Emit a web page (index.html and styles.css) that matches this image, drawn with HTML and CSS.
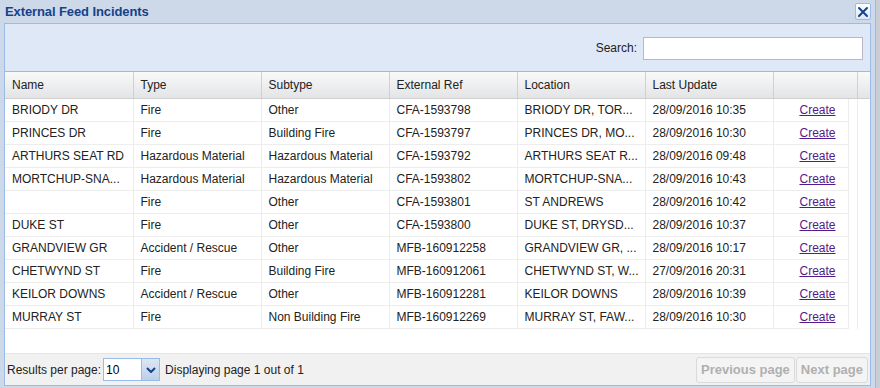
FILE: index.html
```html
<!DOCTYPE html>
<html lang="en">
<head>
    <meta charset="UTF-8">
    <title>External Feed Incidents</title>
    <link rel="stylesheet" href="styles.css">
</head>
<body>
    <div class="window">
        <div class="title-bar">
            <span class="title">External Feed Incidents</span>
            <span class="close-btn">
                <svg width="12" height="12" viewBox="0 0 12 12"><path d="M2 2 L10 10 M10 2 L2 10" stroke="#15428b" stroke-width="2" stroke-linecap="round"/></svg>
            </span>
        </div>
        <div class="frame">
            <div class="toolbar">
                <label for="search">Search:</label>
                <input type="text" id="search">
            </div>
            <div class="grid">
                <table>
                    <colgroup>
                        <col style="width:128px"><col style="width:128px"><col style="width:128px">
                        <col style="width:128px"><col style="width:128px"><col style="width:128px">
                        <col style="width:75px"><col style="width:9px"><col>
                    </colgroup>
                    <thead>
                        <tr>
                            <th>Name</th><th>Type</th><th>Subtype</th><th>External Ref</th><th>Location</th><th>Last Update</th><th colspan="2"></th><th class="gutter"></th>
                        </tr>
                    </thead>
                    <tbody>
                        <tr><td>BRIODY DR</td><td>Fire</td><td>Other</td><td>CFA-1593798</td><td>BRIODY DR, TOR...</td><td>28/09/2016 10:35</td><td class="act"><a href="#">Create</a></td><td class="pad"></td><td class="gutter"></td></tr>
                        <tr><td>PRINCES DR</td><td>Fire</td><td>Building Fire</td><td>CFA-1593797</td><td>PRINCES DR, MO...</td><td>28/09/2016 10:30</td><td class="act"><a href="#">Create</a></td><td class="pad"></td><td class="gutter"></td></tr>
                        <tr><td>ARTHURS SEAT RD</td><td>Hazardous Material</td><td>Hazardous Material</td><td>CFA-1593792</td><td>ARTHURS SEAT R...</td><td>28/09/2016 09:48</td><td class="act"><a href="#">Create</a></td><td class="pad"></td><td class="gutter"></td></tr>
                        <tr><td>MORTCHUP-SNA...</td><td>Hazardous Material</td><td>Hazardous Material</td><td>CFA-1593802</td><td>MORTCHUP-SNA...</td><td>28/09/2016 10:43</td><td class="act"><a href="#">Create</a></td><td class="pad"></td><td class="gutter"></td></tr>
                        <tr><td></td><td>Fire</td><td>Other</td><td>CFA-1593801</td><td>ST ANDREWS</td><td>28/09/2016 10:42</td><td class="act"><a href="#">Create</a></td><td class="pad"></td><td class="gutter"></td></tr>
                        <tr><td>DUKE ST</td><td>Fire</td><td>Other</td><td>CFA-1593800</td><td>DUKE ST, DRYSD...</td><td>28/09/2016 10:37</td><td class="act"><a href="#">Create</a></td><td class="pad"></td><td class="gutter"></td></tr>
                        <tr><td>GRANDVIEW GR</td><td>Accident / Rescue</td><td>Other</td><td>MFB-160912258</td><td>GRANDVIEW GR, ...</td><td>28/09/2016 10:17</td><td class="act"><a href="#">Create</a></td><td class="pad"></td><td class="gutter"></td></tr>
                        <tr><td>CHETWYND ST</td><td>Fire</td><td>Building Fire</td><td>MFB-160912061</td><td>CHETWYND ST, W...</td><td>27/09/2016 20:31</td><td class="act"><a href="#">Create</a></td><td class="pad"></td><td class="gutter"></td></tr>
                        <tr><td>KEILOR DOWNS</td><td>Accident / Rescue</td><td>Other</td><td>MFB-160912281</td><td>KEILOR DOWNS</td><td>28/09/2016 10:39</td><td class="act"><a href="#">Create</a></td><td class="pad"></td><td class="gutter"></td></tr>
                        <tr><td>MURRAY ST</td><td>Fire</td><td>Non Building Fire</td><td>MFB-160912269</td><td>MURRAY ST, FAW...</td><td>28/09/2016 10:30</td><td class="act"><a href="#">Create</a></td><td class="pad"></td><td class="gutter"></td></tr>
                    </tbody>
                </table>
            </div>
            <div class="footer">
                <span class="per-page">Results per page:</span>
                <span class="select">
                    <span class="select-value">10</span>
                    <span class="select-btn">
                        <svg width="10" height="6" viewBox="0 0 10 6"><path d="M1 1 L5 5 L9 1" fill="none" stroke="#15428b" stroke-width="2"/></svg>
                    </span>
                </span>
                <span class="paging-info">Displaying page 1 out of 1</span>
                <span class="pager">
                    <button disabled>Previous page</button>
                    <button disabled>Next page</button>
                </span>
            </div>
        </div>
    </div>
</body>
</html>
```

FILE: styles.css
```css
body {
    margin: 0;
    background-color: #c9ced6;
    font-family: "Liberation Sans", Arial, sans-serif;
    font-size: 12px;
    color: #000;
}
.window {
    width: 876px;
    height: 388px;
    background-color: #cdd9e8;
    box-sizing: border-box;
    border-right: 1px solid #99bbe8;
}
.title-bar {
    height: 23px;
    display: flex;
    align-items: center;
    justify-content: space-between;
    padding: 0 4px 0 5px;
}
.title {
    font-family: "Liberation Sans", Tahoma, sans-serif;
    font-weight: bold;
    font-size: 13px;
    color: #15428b;
    letter-spacing: -0.1px;
}
.close-btn {
    width: 14px;
    height: 15px;
    border: 1px solid #99bbe8;
    border-radius: 2px;
    background: linear-gradient(#ffffff, #dbe6f4);
    display: flex;
    align-items: center;
    justify-content: center;
}
.frame {
    margin: 0 4px 0 4px;
    height: 361px;
    border: 1px solid #99bbe8;
    background-color: #fff;
    display: flex;
    flex-direction: column;
}
.toolbar {
    height: 47px;
    background-color: #dfe8f6;
    border-bottom: 1px solid #99bbe8;
    display: flex;
    align-items: center;
    justify-content: flex-end;
    padding-right: 7px;
}
.toolbar label {
    color: #222;
    margin-right: 6px;
}
.toolbar input {
    width: 220px;
    height: 23px;
    box-sizing: border-box;
    border: 1px solid #b5b8c8;
    padding: 2px 4px;
    margin-top: 1px;
}
.grid {
    flex: 1;
}
table {
    border-collapse: collapse;
    table-layout: fixed;
    width: 100%;
}
th {
    height: 26px;
    text-align: left;
    font-weight: normal;
    color: #222;
    padding: 0 7px;
    background: linear-gradient(#f9f9f9, #e3e4e6);
    border-right: 1px solid #d0d0d0;
    border-bottom: 1px solid #d0d0d0;
    white-space: nowrap;
}
td {
    height: 22px;
    padding: 0 7px;
    border-right: 1px solid #ededed;
    border-bottom: 1px solid #ededed;
    white-space: nowrap;
    overflow: hidden;
    color: #222;
}
td.act {
    text-align: right;
    padding-right: 12px;
}
td.act a {
    color: #551a8b;
}
td.pad {
    padding: 0;
    border-bottom: none;
}
td.gutter {
    padding: 0;
    border-bottom: none;
    border-right: none;
}
th.gutter {
    border-right: none;
}
.footer {
    height: 31px;
    background-color: #f1f1f1;
    border-top: 1px solid #e4e4e4;
    display: flex;
    align-items: center;
    padding: 0 2px 0 2px;
}
.per-page {
    color: #222;
}
.select {
    display: flex;
    height: 23px;
    width: 57px;
    box-sizing: border-box;
    border: 1px solid #99bbe8;
    background-color: #fff;
    margin-left: 2px;
}
.select-value {
    flex: 1;
    line-height: 22px;
    padding-left: 2px;
}
.select-btn {
    width: 17px;
    background: linear-gradient(#dbe6f4, #bdd0ea);
    border-left: 1px solid #99bbe8;
    display: flex;
    align-items: center;
    justify-content: center;
}
.paging-info {
    margin-left: 5px;
    color: #222;
}
.pager {
    margin-left: auto;
    display: flex;
    gap: 1px;
}
.pager button {
    font-family: "Liberation Sans", Arial, sans-serif;
    font-size: 13px;
    font-weight: bold;
    color: #b0b0b0;
    background-color: #f4f4f4;
    border: 1px solid #dadada;
    border-radius: 3px;
    height: 26px;
    padding: 0 4px;
}
```
